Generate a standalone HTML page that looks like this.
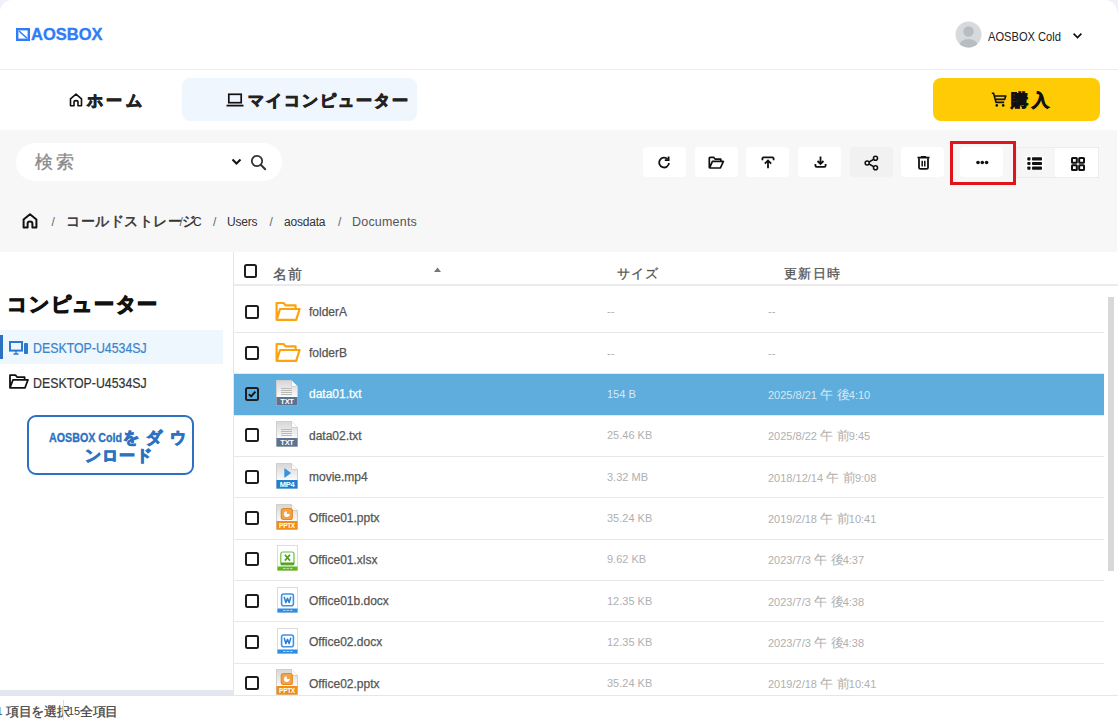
<!DOCTYPE html>
<html><head><meta charset="utf-8">
<style>
*{box-sizing:border-box;margin:0;padding:0}
html,body{width:1118px;height:720px;overflow:hidden;background:#eef1fb;font-family:"Liberation Sans",sans-serif;color:#222}
.a{position:absolute;white-space:nowrap}
svg{display:block}
.tb{position:absolute;top:147px;width:43px;height:30px;background:#fff;border-radius:4px}
.tb svg{position:absolute}
.row{position:absolute;left:234px;width:870px;border-bottom:1px solid #e8e8e8}
.cb{position:absolute;width:14px;height:14px;border:2px solid #1e1e1e;border-radius:2.5px}
.nm{position:absolute;left:75px;font-size:12px;line-height:12px;color:#555}
.sz{position:absolute;left:373px;font-size:11px;line-height:11px;color:#b0b0b0;letter-spacing:-0.3px}
.dt{position:absolute;left:534px;font-size:11px;line-height:11px;color:#b0b0b0;letter-spacing:-0.3px}
.ic{position:absolute}
.sel{background:#5eaddc}
.sel .nm{color:#fff}
.sel .sz,.sel .dt{color:#d4e9f6}
</style></head><body>
<!-- header -->
<div class="a" style="left:0;top:0;width:1117px;height:720px;background:#fff;border-radius:12px 12px 0 0"></div>
<div class="a" style="left:1117px;top:12px;width:1px;height:708px;background:#fff"></div>
<div class="a" style="left:0;top:69px;width:1118px;height:1px;background:#ededed"></div>
<svg class="a" style="left:16px;top:28px" width="14" height="13" viewBox="0 0 14 13"><rect x="1.2" y="1.2" width="11.6" height="10.6" fill="none" stroke="#2f7cf6" stroke-width="2.4"/><line x1="3" y1="3" x2="11" y2="10.2" stroke="#2f7cf6" stroke-width="1.5"/></svg>
<div class="a" style="left:31px;top:26px;font-size:16.5px;line-height:16.5px;font-weight:bold;color:#2f7cf6;-webkit-text-stroke:0.35px #2f7cf6">AOSBOX</div>
<svg class="a" style="left:955px;top:21px" width="27" height="27" viewBox="0 0 27 27"><defs><clipPath id="av"><circle cx="13.5" cy="13.5" r="13"/></clipPath></defs><circle cx="13.5" cy="13.5" r="13" fill="#d7dadd"/><g clip-path="url(#av)"><circle cx="13.5" cy="10.5" r="5.2" fill="#b8bdc1"/><ellipse cx="13.5" cy="25" rx="9.5" ry="7" fill="#b8bdc1"/></g></svg>
<div class="a" style="left:988px;top:30.5px;font-size:12.5px;line-height:12.5px;color:#222;transform-origin:0 0;transform:scaleX(0.89)">AOSBOX Cold</div>
<svg class="a" style="left:1072px;top:32px" width="11" height="8" viewBox="0 0 11 8"><path d="M1.6 1.6 L5.5 5.5 L9.4 1.6" fill="none" stroke="#111" stroke-width="1.7"/></svg>

<!-- nav -->
<svg class="a" style="left:69px;top:93px" width="14" height="14" viewBox="0 0 14 14"><path d="M1.5 12.8 V5.8 L7 1.2 L12.5 5.8 V12.8 H9 V9.2 Q9 7.6 7 7.6 Q5 7.6 5 9.2 V12.8Z" fill="none" stroke="#111" stroke-width="1.6" stroke-linejoin="round"/></svg>
<div class="a" style="left:87.4px;top:92.5px;font-size:16px;line-height:16px;font-weight:bold;color:#222;letter-spacing:3.1px;-webkit-text-stroke:1px #222">ホーム</div>
<div class="a" style="left:182px;top:78px;width:235px;height:43px;background:#f0f6fe;border-radius:8px"></div>
<svg class="a" style="left:226px;top:93px" width="18" height="14" viewBox="0 0 18 14"><rect x="2.8" y="1.3" width="12.4" height="8.4" fill="none" stroke="#111" stroke-width="1.7"/><line x1="0.5" y1="12.6" x2="17.5" y2="12.6" stroke="#111" stroke-width="1.8"/></svg>
<div class="a" style="left:247.7px;top:92.5px;font-size:16px;line-height:16px;font-weight:bold;color:#222;letter-spacing:2px;-webkit-text-stroke:1px #222">マイコンピューター</div>
<div class="a" style="left:933px;top:78px;width:167px;height:43px;background:#ffcb05;border-radius:8px"></div>
<svg class="a" style="left:991px;top:92px" width="16" height="15" viewBox="0 0 16 15"><path d="M0.8 1.2 H2.6 L5 10.4 H13.2 M3.5 4 H14.8 L13.6 7.4 H4.4" fill="none" stroke="#111" stroke-width="1.6" stroke-linejoin="round"/><circle cx="5.8" cy="13.4" r="1.3" fill="#111"/><circle cx="12.2" cy="13.4" r="1.3" fill="#111"/></svg>
<div class="a" style="left:1011.2px;top:92px;font-size:17px;line-height:17px;font-weight:bold;color:#111;letter-spacing:3.95px;-webkit-text-stroke:1px #111">購入</div>

<!-- band -->
<div class="a" style="left:0;top:130px;width:1117px;height:122px;background:#f7f7f7"></div>
<div class="a" style="left:16px;top:143px;width:266px;height:38px;background:#fff;border-radius:19px"></div>
<div class="a" style="left:35px;top:153px;font-size:18px;line-height:18px;color:#8a8a8a;letter-spacing:3.4px;-webkit-text-stroke:0.3px #8a8a8a">検索</div>
<svg class="a" style="left:231px;top:158px" width="11" height="8" viewBox="0 0 11 8"><path d="M1.5 1.5 L5.5 5.5 L9.5 1.5" fill="none" stroke="#111" stroke-width="2"/></svg>
<svg class="a" style="left:250px;top:154px" width="17" height="17" viewBox="0 0 17 17"><circle cx="7" cy="7" r="5.2" fill="none" stroke="#333" stroke-width="1.8"/><line x1="10.8" y1="10.8" x2="15.2" y2="15.2" stroke="#333" stroke-width="2" stroke-linecap="round"/></svg>

<div class="tb" style="left:643px"><svg style="left:15px;top:8.5px" width="13" height="13" viewBox="0 0 13 13"><path d="M11 7 A4.9 4.9 0 1 1 9.6 3.1" fill="none" stroke="#111" stroke-width="1.8"/><path d="M6.8 4.2 H10.6 V0.6" fill="none" stroke="#111" stroke-width="1.8"/></svg></div>
<div class="tb" style="left:694.5px"><svg style="left:13.5px;top:8.5px" width="17" height="13" viewBox="0 0 17 13"><path d="M1.3 11.2 V2.2 Q1.3 1.3 2.2 1.3 H5.6 L7.3 3.2 H12.8 V5.2 M1.3 11.2 Q1.3 12 2.2 12 H12.4 L15.4 5.4 H4.4 L1.8 11.5" fill="none" stroke="#111" stroke-width="1.7" stroke-linejoin="round"/></svg></div>
<div class="tb" style="left:746px"><svg style="left:15px;top:9px" width="14" height="13" viewBox="0 0 14 13"><path d="M1.4 4.2 V2.6 Q1.4 1.4 2.6 1.4 H11.4 Q12.6 1.4 12.6 2.6 V4.2" fill="none" stroke="#111" stroke-width="1.8"/><path d="M3.8 7.6 L7 4.6 L10.2 7.6 M7 5 V12.2" fill="none" stroke="#111" stroke-width="1.8"/></svg></div>
<div class="tb" style="left:798px"><svg style="left:15.5px;top:9px" width="13" height="13" viewBox="0 0 13 13"><path d="M6.5 0.5 V8 M3.5 5 L6.5 8 L9.5 5" fill="none" stroke="#111" stroke-width="1.8"/><path d="M1.4 8 V9.6 Q1.4 10.9 2.6 10.9 H10.4 Q11.6 10.9 11.6 9.6 V8" fill="none" stroke="#111" stroke-width="1.8"/></svg></div>
<div class="tb" style="left:849.5px;background:#f1f1f1"><svg style="left:14.5px;top:7.5px" width="15" height="16" viewBox="0 0 15 16"><path d="M11.2 3.4 L3.4 8 L11.2 12.6" fill="none" stroke="#111" stroke-width="1.6"/><circle cx="11.5" cy="3.2" r="2" fill="#fff" stroke="#111" stroke-width="1.6"/><circle cx="3.2" cy="8" r="2" fill="#fff" stroke="#111" stroke-width="1.6"/><circle cx="11.5" cy="12.8" r="2" fill="#fff" stroke="#111" stroke-width="1.6"/></svg></div>
<div class="tb" style="left:901px"><svg style="left:15.5px;top:8.5px" width="13" height="14" viewBox="0 0 13 14"><path d="M0.5 1.6 H12.5" stroke="#111" stroke-width="1.8"/><path d="M4.4 1 Q4.4 0.3 5 0.3 H8 Q8.6 0.3 8.6 1" fill="none" stroke="#111" stroke-width="1.2"/><path d="M2 2.2 V11.4 Q2 12.8 3.4 12.8 H9.6 Q11 12.8 11 11.4 V2.2" fill="none" stroke="#111" stroke-width="1.8"/><path d="M5.2 4.8 V10.4 M7.8 4.8 V10.4" stroke="#111" stroke-width="1.5"/></svg></div>
<div class="tb" style="left:960px"><svg style="left:15.5px;top:13px" width="13" height="5" viewBox="0 0 13 5"><circle cx="2" cy="2.5" r="1.8" fill="#111"/><circle cx="6.3" cy="2.5" r="1.8" fill="#111"/><circle cx="10.6" cy="2.5" r="1.8" fill="#111"/></svg></div>
<div class="a" style="left:950px;top:141px;width:66px;height:44px;border:3px solid #e1141c"></div>
<div class="a" style="left:1016px;top:147px;width:83px;height:31px;border:1px solid #ececec;background:#fff"></div>
<div class="a" style="left:1017px;top:148px;width:38px;height:29px;background:#f6f6f6"></div>
<div class="a" style="left:1026px;top:156px;width:18px;height:14px;background:#fff"></div>
<svg class="a" style="left:1027px;top:157px" width="16" height="13" viewBox="0 0 16 13"><rect x="0.3" y="0.3" width="3.2" height="3.2" rx="0.8" fill="#111"/><rect x="0.3" y="4.9" width="3.2" height="3.2" rx="0.8" fill="#111"/><rect x="0.3" y="9.5" width="3.2" height="3.2" rx="0.8" fill="#111"/><rect x="5" y="0.3" width="10" height="3.2" rx="0.8" fill="#111"/><rect x="5" y="4.9" width="10" height="3.2" rx="0.8" fill="#111"/><rect x="5" y="9.5" width="10" height="3.2" rx="0.8" fill="#111"/></svg>
<svg class="a" style="left:1070.5px;top:156.5px" width="14" height="14" viewBox="0 0 14 14"><rect x="1" y="1" width="4.8" height="4.8" rx="0.6" fill="none" stroke="#111" stroke-width="2"/><rect x="8.2" y="1" width="4.8" height="4.8" rx="0.6" fill="none" stroke="#111" stroke-width="2"/><rect x="1" y="8.2" width="4.8" height="4.8" rx="0.6" fill="none" stroke="#111" stroke-width="2"/><rect x="8.2" y="8.2" width="4.8" height="4.8" rx="0.6" fill="none" stroke="#111" stroke-width="2"/></svg>

<!-- breadcrumb -->
<svg class="a" style="left:22px;top:213px" width="16" height="16" viewBox="0 0 16 16"><path d="M1.6 14.6 V6.6 L8 1.3 L14.4 6.6 V14.6 H10.4 V10.6 Q10.4 8.6 8 8.6 Q5.6 8.6 5.6 10.6 V14.6Z" fill="none" stroke="#111" stroke-width="2" stroke-linejoin="round"/></svg>
<div class="a" style="left:51.5px;top:215.5px;font-size:12px;line-height:12px;color:#666">/</div>
<div class="a" style="left:66.4px;top:214px;font-size:14px;line-height:14px;color:#333;letter-spacing:0.47px;-webkit-text-stroke:0.5px #333">コールドストレージ</div>
<div class="a" style="left:179.5px;top:215.5px;font-size:12px;line-height:12px;color:#666">/</div>
<div class="a" style="left:193px;top:215.5px;font-size:12px;line-height:12px;color:#333">C</div>
<div class="a" style="left:213px;top:215.5px;font-size:12px;line-height:12px;color:#666">/</div>
<div class="a" style="left:227px;top:215.5px;font-size:12px;line-height:12px;color:#333;letter-spacing:-0.2px">Users</div>
<div class="a" style="left:269.5px;top:215.5px;font-size:12px;line-height:12px;color:#666">/</div>
<div class="a" style="left:284px;top:215.5px;font-size:12px;line-height:12px;color:#333;letter-spacing:-0.2px">aosdata</div>
<div class="a" style="left:338px;top:215.5px;font-size:12px;line-height:12px;color:#666">/</div>
<div class="a" style="left:352px;top:215.5px;font-size:12.5px;line-height:12px;color:#555;letter-spacing:0.2px">Documents</div>

<!-- left panel -->
<div class="a" style="left:233px;top:252px;width:1px;height:444px;background:#e6e6e6"></div>
<div class="a" style="left:7.4px;top:293.5px;font-size:20px;line-height:20px;font-weight:bold;color:#111;letter-spacing:1.63px;-webkit-text-stroke:1.2px #111">コンピューター</div>
<div class="a" style="left:0;top:330px;width:223px;height:34px;background:#eef6fe"></div>
<div class="a" style="left:0;top:335px;width:3px;height:24px;background:#2b72c2"></div>
<svg class="a" style="left:9px;top:341px" width="20" height="15" viewBox="0 0 20 15"><rect x="1" y="1" width="12" height="8.6" fill="none" stroke="#2b7ad0" stroke-width="2"/><line x1="4.5" y1="13" x2="9.5" y2="13" stroke="#2b7ad0" stroke-width="1.6"/><line x1="7" y1="10" x2="7" y2="12.5" stroke="#2b7ad0" stroke-width="1.4"/><rect x="15" y="2" width="4" height="11" rx="0.8" fill="#2b7ad0"/></svg>
<div class="a" style="left:33px;top:341.2px;font-size:14.5px;line-height:14.5px;color:#3a84cc;-webkit-text-stroke:0.2px #3a84cc;transform-origin:0 0;transform:scaleX(0.852)">DESKTOP-U4534SJ</div>
<svg class="a" style="left:9px;top:374px" width="20" height="15" viewBox="0 0 20 15"><path d="M1 13.8 V1.2 H6.6 L8.2 3.2 H15.6 V5.8 M1 13.8 L4 5.8 H19 L16 13.8Z" fill="none" stroke="#111" stroke-width="1.8" stroke-linejoin="round"/></svg>
<div class="a" style="left:33px;top:375.5px;font-size:14.5px;line-height:14.5px;color:#333;-webkit-text-stroke:0.2px #333;transform-origin:0 0;transform:scaleX(0.852)">DESKTOP-U4534SJ</div>
<div class="a" style="left:27px;top:415px;width:167px;height:60px;border:2px solid #2b72c2;border-radius:9px"></div>
<div class="a" style="left:48.5px;top:431.5px;font-size:12.5px;line-height:12.5px;font-weight:bold;color:#2b72c2;-webkit-text-stroke:0.35px #2b72c2;transform-origin:0 0;transform:scaleX(0.855)">AOSBOX Cold</div>
<div class="a" style="left:122.5px;top:430px;font-size:16px;line-height:16px;font-weight:bold;color:#2b72c2;letter-spacing:7.5px;-webkit-text-stroke:1px #2b72c2">をダウ</div>
<div class="a" style="left:84.75px;top:448px;font-size:15.5px;line-height:15.5px;font-weight:bold;color:#2b72c2;letter-spacing:1.2px;-webkit-text-stroke:1px #2b72c2">ンロード</div>
<div class="a" style="left:0;top:690px;width:234px;height:5px;background:#e4e6f0"></div>

<!-- table header -->
<div class="a" style="left:234px;top:284px;width:884px;height:2px;background:#ebebeb"></div>
<div class="cb" style="left:243.5px;top:264px;width:13.5px;height:13.5px"></div>
<div class="a" style="left:272.5px;top:266.5px;font-size:14px;line-height:14px;color:#555;letter-spacing:1.9px;-webkit-text-stroke:0.3px #555">名前</div>
<svg class="a" style="left:434px;top:267px" width="7" height="5" viewBox="0 0 7 5"><path d="M0 5 L3.5 0.5 L7 5Z" fill="#777"/></svg>
<div class="a" style="left:616.9px;top:266.5px;font-size:13px;line-height:13px;color:#555;letter-spacing:1.2px;-webkit-text-stroke:0.3px #555">サイズ</div>
<div class="a" style="left:783.7px;top:266.5px;font-size:13px;line-height:13px;color:#555;letter-spacing:1.45px;-webkit-text-stroke:0.3px #555">更新日時</div>

<div class="row" style="top:291.00px;height:42.00px"></div>
<div class="cb" style="left:244.5px;top:304.50px"></div>
<svg class="a" style="left:275px;top:300.50px" width="26" height="21" viewBox="0 0 26 21"><path d="M1.6 18.8 V2 H8.6 L10.6 4.4 H20.6 V8 M1.6 18.8 L5 8 H24.6 L21.2 18.8Z" fill="none" stroke="#fca311" stroke-width="2.2" stroke-linejoin="round"/></svg>
<div class="a" style="left:309px;top:305.64px;font-size:12px;line-height:12px;color:#555;-webkit-text-stroke:0.25px #555">folderA</div>
<div class="a" style="left:607px;top:306.19px;font-size:11px;line-height:11px;color:#b0b0b0;letter-spacing:0px">--</div>
<div class="a" style="left:768px;top:306.19px;font-size:11px;line-height:11px;color:#b0b0b0;">--</div>
<div class="row" style="top:333.00px;height:41.33px"></div>
<div class="cb" style="left:244.5px;top:345.83px"></div>
<svg class="a" style="left:275px;top:341.83px" width="26" height="21" viewBox="0 0 26 21"><path d="M1.6 18.8 V2 H8.6 L10.6 4.4 H20.6 V8 M1.6 18.8 L5 8 H24.6 L21.2 18.8Z" fill="none" stroke="#fca311" stroke-width="2.2" stroke-linejoin="round"/></svg>
<div class="a" style="left:309px;top:346.97px;font-size:12px;line-height:12px;color:#555;-webkit-text-stroke:0.25px #555">folderB</div>
<div class="a" style="left:607px;top:347.52px;font-size:11px;line-height:11px;color:#b0b0b0;letter-spacing:0px">--</div>
<div class="a" style="left:768px;top:347.52px;font-size:11px;line-height:11px;color:#b0b0b0;">--</div>
<div class="row sel" style="top:374.33px;height:41.33px"></div>
<div class="cb" style="left:244.5px;top:387.16px"><svg width="10" height="10" viewBox="0 0 10 10" style="position:absolute;left:0;top:0"><path d="M1.8 5.2 L4.2 7.4 L8.4 2.6" fill="none" stroke="#111" stroke-width="1.9"/></svg></div>
<svg class="a" style="left:276px;top:380.16px" width="22" height="26" viewBox="0 0 22 26"><defs><linearGradient id="pg" x1="0" y1="0" x2="0" y2="1"><stop offset="0" stop-color="#d6d6d6"/><stop offset="0.65" stop-color="#fafafa"/></linearGradient></defs><path d="M0.5 0.5 H15.5 L21.5 6.5 V25.5 H0.5Z" fill="url(#pg)" stroke="#cfcfcf"/><path d="M15.5 0.5 V6.5 H21.5" fill="#fff" stroke="#cfcfcf"/><path d="M5 8.5h11M5 10.5h11M5 12.5h11M5 14.5h11" stroke="#b9b9b9" stroke-width="1"/><rect x="0.5" y="17" width="21" height="8.5" fill="#5b7290"/><text x="11" y="24.3" font-size="7.5" font-family="Liberation Sans" font-weight="bold" fill="#fff" text-anchor="middle" letter-spacing="-0.3">TXT</text></svg>
<div class="a" style="left:309px;top:388.30px;font-size:12px;line-height:12px;color:#fff;-webkit-text-stroke:0.25px #fff">data01.txt</div>
<div class="a" style="left:607px;top:388.85px;font-size:11px;line-height:11px;color:#d4e9f6;letter-spacing:0px">154 B</div>
<div class="a" style="left:768px;top:388.85px;font-size:11px;line-height:11px;color:#d4e9f6;">2025/8/21 <span style="font-size:13px;letter-spacing:4.15px;margin-right:-5.5px">午後</span>4:10</div>
<div class="row" style="top:415.66px;height:41.33px"></div>
<div class="cb" style="left:244.5px;top:428.49px"></div>
<svg class="a" style="left:276px;top:421.49px" width="22" height="26" viewBox="0 0 22 26"><defs><linearGradient id="pg" x1="0" y1="0" x2="0" y2="1"><stop offset="0" stop-color="#d6d6d6"/><stop offset="0.65" stop-color="#fafafa"/></linearGradient></defs><path d="M0.5 0.5 H15.5 L21.5 6.5 V25.5 H0.5Z" fill="url(#pg)" stroke="#cfcfcf"/><path d="M15.5 0.5 V6.5 H21.5" fill="#fff" stroke="#cfcfcf"/><path d="M5 8.5h11M5 10.5h11M5 12.5h11M5 14.5h11" stroke="#b9b9b9" stroke-width="1"/><rect x="0.5" y="17" width="21" height="8.5" fill="#5b7290"/><text x="11" y="24.3" font-size="7.5" font-family="Liberation Sans" font-weight="bold" fill="#fff" text-anchor="middle" letter-spacing="-0.3">TXT</text></svg>
<div class="a" style="left:309px;top:429.63px;font-size:12px;line-height:12px;color:#555;-webkit-text-stroke:0.25px #555">data02.txt</div>
<div class="a" style="left:607px;top:430.18px;font-size:11px;line-height:11px;color:#b0b0b0;letter-spacing:0px">25.46 KB</div>
<div class="a" style="left:768px;top:430.18px;font-size:11px;line-height:11px;color:#b0b0b0;">2025/8/22 <span style="font-size:13px;letter-spacing:4.15px;margin-right:-5.5px">午前</span>9:45</div>
<div class="row" style="top:456.99px;height:41.33px"></div>
<div class="cb" style="left:244.5px;top:469.82px"></div>
<svg class="a" style="left:276px;top:462.82px" width="22" height="26" viewBox="0 0 22 26"><defs><linearGradient id="pg" x1="0" y1="0" x2="0" y2="1"><stop offset="0" stop-color="#d6d6d6"/><stop offset="0.65" stop-color="#fafafa"/></linearGradient></defs><path d="M0.5 0.5 H15.5 L21.5 6.5 V25.5 H0.5Z" fill="url(#pg)" stroke="#cfcfcf"/><path d="M15.5 0.5 V6.5 H21.5" fill="#fff" stroke="#cfcfcf"/><path d="M8.3 5.8 Q8.3 5 9 5.5 L14.5 9.6 Q15 10 14.5 10.4 L9 14.6 Q8.3 15 8.3 14.2Z" fill="#3b93de"/><rect x="0.5" y="17" width="21" height="8.5" fill="#1f80d2"/><text x="11" y="24.3" font-size="7.5" font-family="Liberation Sans" font-weight="bold" fill="#fff" text-anchor="middle" letter-spacing="-0.3">MP4</text></svg>
<div class="a" style="left:309px;top:470.96px;font-size:12px;line-height:12px;color:#555;-webkit-text-stroke:0.25px #555">movie.mp4</div>
<div class="a" style="left:607px;top:471.51px;font-size:11px;line-height:11px;color:#b0b0b0;letter-spacing:0px">3.32 MB</div>
<div class="a" style="left:768px;top:471.51px;font-size:11px;line-height:11px;color:#b0b0b0;">2018/12/14 <span style="font-size:13px;letter-spacing:4.15px;margin-right:-5.5px">午前</span>9:08</div>
<div class="row" style="top:498.32px;height:41.33px"></div>
<div class="cb" style="left:244.5px;top:511.15px"></div>
<svg class="a" style="left:276px;top:504.15px" width="22" height="26" viewBox="0 0 22 26"><defs><linearGradient id="pg" x1="0" y1="0" x2="0" y2="1"><stop offset="0" stop-color="#d6d6d6"/><stop offset="0.65" stop-color="#fafafa"/></linearGradient></defs><path d="M0.5 0.5 H15.5 L21.5 6.5 V25.5 H0.5Z" fill="url(#pg)" stroke="#cfcfcf"/><path d="M15.5 0.5 V6.5 H21.5" fill="#fff" stroke="#cfcfcf"/><rect x="5.3" y="4.5" width="11" height="11" rx="2" fill="#f3a24a" stroke="#e8891f" stroke-width="1.2"/><path d="M10.8 7.2 A2.9 2.9 0 1 0 13.7 10.1 H10.8Z" fill="#fff"/><rect x="0.5" y="17" width="21" height="8.5" fill="#f08d1c"/><text x="11" y="24.3" font-size="6.5" font-family="Liberation Sans" font-weight="bold" fill="#fff" text-anchor="middle" letter-spacing="-0.3">PPTX</text></svg>
<div class="a" style="left:309px;top:512.29px;font-size:12px;line-height:12px;color:#555;-webkit-text-stroke:0.25px #555">Office01.pptx</div>
<div class="a" style="left:607px;top:512.84px;font-size:11px;line-height:11px;color:#b0b0b0;letter-spacing:0px">35.24 KB</div>
<div class="a" style="left:768px;top:512.84px;font-size:11px;line-height:11px;color:#b0b0b0;">2019/2/18 <span style="font-size:13px;letter-spacing:4.15px;margin-right:-5.5px">午前</span>10:41</div>
<div class="row" style="top:539.65px;height:41.33px"></div>
<div class="cb" style="left:244.5px;top:552.48px"></div>
<svg class="a" style="left:276.5px;top:545.48px" width="22" height="26" viewBox="0 0 22 26"><rect x="0.5" y="0.5" width="20" height="25" fill="#fff" stroke="#dcdcdc"/><rect x="3.8" y="7" width="13.2" height="13" rx="2" fill="none" stroke="#6cbf3a" stroke-width="1.2"/><rect x="4" y="17.5" width="13" height="2.3" fill="#4aa018"/><path d="M7.8 9.8 L13 15.6 M13 9.8 L7.8 15.6" stroke="#4aa018" stroke-width="1.7"/><rect x="0.5" y="21.5" width="20" height="4" fill="#5cb819"/><path d="M6 23.5h2.5M9.5 23.5h2.5M13 23.5h2.5" stroke="#fff" stroke-width="1" opacity="0.6"/></svg>
<div class="a" style="left:309px;top:553.62px;font-size:12px;line-height:12px;color:#555;-webkit-text-stroke:0.25px #555">Office01.xlsx</div>
<div class="a" style="left:607px;top:554.17px;font-size:11px;line-height:11px;color:#b0b0b0;letter-spacing:0px">9.62 KB</div>
<div class="a" style="left:768px;top:554.17px;font-size:11px;line-height:11px;color:#b0b0b0;">2023/7/3 <span style="font-size:13px;letter-spacing:4.15px;margin-right:-5.5px">午後</span>4:37</div>
<div class="row" style="top:580.98px;height:41.33px"></div>
<div class="cb" style="left:244.5px;top:593.81px"></div>
<svg class="a" style="left:276.5px;top:586.81px" width="22" height="26" viewBox="0 0 22 26"><rect x="0.5" y="0.5" width="20" height="25" fill="#fff" stroke="#dcdcdc"/><rect x="4.6" y="7" width="11.8" height="11.8" rx="2" fill="none" stroke="#3d94e3" stroke-width="1.6"/><path d="M7.2 9.8 L8.8 15.6 L10.5 11.4 L12.2 15.6 L13.8 9.8" fill="none" stroke="#2a7fd6" stroke-width="1.5" stroke-linejoin="round"/><rect x="0.5" y="21.5" width="20" height="4" fill="#2a8de6"/><path d="M6 23.5h2.5M9.5 23.5h2.5M13 23.5h2.5" stroke="#fff" stroke-width="1" opacity="0.6"/></svg>
<div class="a" style="left:309px;top:594.95px;font-size:12px;line-height:12px;color:#555;-webkit-text-stroke:0.25px #555">Office01b.docx</div>
<div class="a" style="left:607px;top:595.50px;font-size:11px;line-height:11px;color:#b0b0b0;letter-spacing:0px">12.35 KB</div>
<div class="a" style="left:768px;top:595.50px;font-size:11px;line-height:11px;color:#b0b0b0;">2023/7/3 <span style="font-size:13px;letter-spacing:4.15px;margin-right:-5.5px">午後</span>4:38</div>
<div class="row" style="top:622.31px;height:41.33px"></div>
<div class="cb" style="left:244.5px;top:635.14px"></div>
<svg class="a" style="left:276.5px;top:628.14px" width="22" height="26" viewBox="0 0 22 26"><rect x="0.5" y="0.5" width="20" height="25" fill="#fff" stroke="#dcdcdc"/><rect x="4.6" y="7" width="11.8" height="11.8" rx="2" fill="none" stroke="#3d94e3" stroke-width="1.6"/><path d="M7.2 9.8 L8.8 15.6 L10.5 11.4 L12.2 15.6 L13.8 9.8" fill="none" stroke="#2a7fd6" stroke-width="1.5" stroke-linejoin="round"/><rect x="0.5" y="21.5" width="20" height="4" fill="#2a8de6"/><path d="M6 23.5h2.5M9.5 23.5h2.5M13 23.5h2.5" stroke="#fff" stroke-width="1" opacity="0.6"/></svg>
<div class="a" style="left:309px;top:636.28px;font-size:12px;line-height:12px;color:#555;-webkit-text-stroke:0.25px #555">Office02.docx</div>
<div class="a" style="left:607px;top:636.83px;font-size:11px;line-height:11px;color:#b0b0b0;letter-spacing:0px">12.35 KB</div>
<div class="a" style="left:768px;top:636.83px;font-size:11px;line-height:11px;color:#b0b0b0;">2023/7/3 <span style="font-size:13px;letter-spacing:4.15px;margin-right:-5.5px">午後</span>4:38</div>
<div class="row" style="top:663.64px;height:41.33px;border-bottom:0"></div>
<div class="cb" style="left:244.5px;top:676.47px"></div>
<svg class="a" style="left:276px;top:669.47px" width="22" height="26" viewBox="0 0 22 26"><defs><linearGradient id="pg" x1="0" y1="0" x2="0" y2="1"><stop offset="0" stop-color="#d6d6d6"/><stop offset="0.65" stop-color="#fafafa"/></linearGradient></defs><path d="M0.5 0.5 H15.5 L21.5 6.5 V25.5 H0.5Z" fill="url(#pg)" stroke="#cfcfcf"/><path d="M15.5 0.5 V6.5 H21.5" fill="#fff" stroke="#cfcfcf"/><rect x="5.3" y="4.5" width="11" height="11" rx="2" fill="#f3a24a" stroke="#e8891f" stroke-width="1.2"/><path d="M10.8 7.2 A2.9 2.9 0 1 0 13.7 10.1 H10.8Z" fill="#fff"/><rect x="0.5" y="17" width="21" height="8.5" fill="#f08d1c"/><text x="11" y="24.3" font-size="6.5" font-family="Liberation Sans" font-weight="bold" fill="#fff" text-anchor="middle" letter-spacing="-0.3">PPTX</text></svg>
<div class="a" style="left:309px;top:677.61px;font-size:12px;line-height:12px;color:#555;-webkit-text-stroke:0.25px #555">Office02.pptx</div>
<div class="a" style="left:607px;top:678.16px;font-size:11px;line-height:11px;color:#b0b0b0;letter-spacing:0px">35.24 KB</div>
<div class="a" style="left:768px;top:678.16px;font-size:11px;line-height:11px;color:#b0b0b0;">2019/2/18 <span style="font-size:13px;letter-spacing:4.15px;margin-right:-5.5px">午前</span>10:41</div>
<!-- scrollbar -->
<div class="a" style="left:1108px;top:297px;width:6px;height:274px;background:#d8d8d8"></div>
<div class="a" style="left:0;top:695px;width:1118px;height:1px;background:#e6e6e6"></div>
<!-- status -->
<div class="a" style="left:-3.5px;top:706.2px;font-size:11px;line-height:11px;color:#444">1</div>
<div class="a" style="left:5.7px;top:704.7px;font-size:13px;line-height:13px;color:#444;letter-spacing:-0.11px;-webkit-text-stroke:0.3px #444">項目を選択</div>
<div class="a" style="left:62.5px;top:700px;width:1px;height:20px;background:#ddd"></div>
<div class="a" style="left:68px;top:706.2px;font-size:11px;line-height:11px;color:#444">15</div>
<div class="a" style="left:80.3px;top:704.7px;font-size:13px;line-height:13px;color:#444;letter-spacing:-0.4px;-webkit-text-stroke:0.3px #444">全項目</div>
</body></html>
